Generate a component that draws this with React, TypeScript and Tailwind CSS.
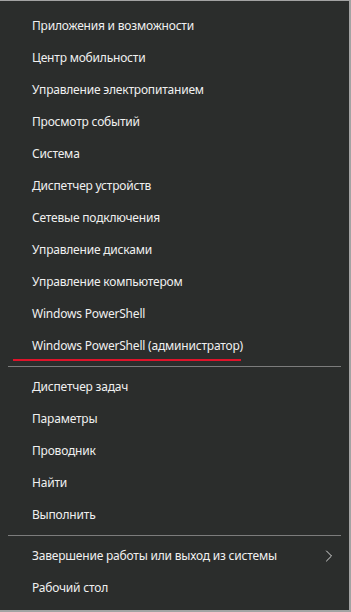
import { ChevronRight } from "lucide-react";

const groupOne = [
  "Приложения и возможности",
  "Центр мобильности",
  "Управление электропитанием",
  "Просмотр событий",
  "Система",
  "Диспетчер устройств",
  "Сетевые подключения",
  "Управление дисками",
  "Управление компьютером",
  "Windows PowerShell",
];

const groupTwo = ["Диспетчер задач", "Параметры", "Проводник", "Найти", "Выполнить"];

function Item({ label, arrow }: { label: string; arrow?: boolean }) {
  return (
    <div className="relative flex h-8 items-center pl-8 pr-[10px]">
      <span className="flex-1 whitespace-nowrap">{label}</span>
      {arrow && <ChevronRight className="h-5 w-5 text-[#d8d8d8]" strokeWidth={1.2} />}
    </div>
  );
}

function Divider() {
  return (
    <div className="py-1">
      <div className="mx-2 h-px bg-[#7c7c7c]" />
    </div>
  );
}

export default function App() {
  return (
    <div
      className="h-[612px] w-[351px] border-t border-r-2 border-b-2 border-[#a3a3a3] bg-[#2b2d2c] pt-[9px] text-[12px] tracking-[-0.2px] text-[#f0f0f0]"
      style={{ fontFamily: '"Noto Sans", "Open Sans", sans-serif' }}
    >
      {groupOne.map((label) => (
        <Item key={label} label={label} />
      ))}
      <div className="relative">
        <Item label="Windows PowerShell (администратор)" />
        <div className="absolute bottom-[1px] left-[13px] h-[2px] w-[228px] bg-[#e0132a]" />
      </div>
      <Divider />
      {groupTwo.map((label) => (
        <Item key={label} label={label} />
      ))}
      <Divider />
      <Item label="Завершение работы или выход из системы" arrow />
      <Item label="Рабочий стол" />
    </div>
  );
}
